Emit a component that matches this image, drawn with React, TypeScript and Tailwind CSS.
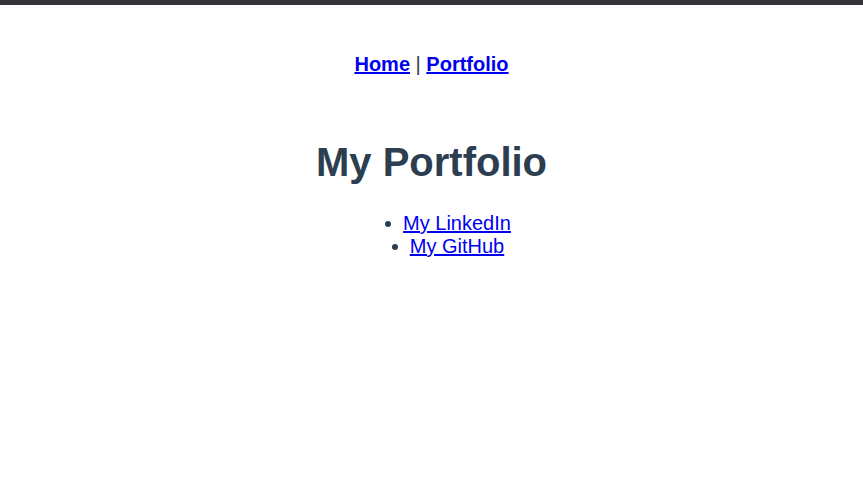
import React from "react";

function Item({ children }: { children: React.ReactNode }) {
  return (
    <li>
      <span className="relative inline-block">
        <span className="absolute left-[-18px] top-[9px] h-[6px] w-[6px] rounded-full bg-[#2c3e50]" />
        <a href="#" className="text-[#0000ee] underline">{children}</a>
      </span>
    </li>
  );
}

export default function App() {
  return (
    <div className="min-h-[492px] bg-white text-[#2c3e50] text-center" style={{ fontFamily: '"Liberation Sans", Arial, sans-serif' }}>
      <div className="h-[5px] bg-[#343538]" />
      <nav className="pt-[48px] text-[20px] leading-[23px] font-bold">
        <a href="#" className="text-[#0000ee] underline">Home</a>
        <span className="font-normal"> | </span>
        <a href="#" className="text-[#0000ee] underline">Portfolio</a>
      </nav>
      <h1 className="mt-[63px] text-[40px] leading-[46px] font-bold">My Portfolio</h1>
      <ul className="mt-[27px] list-none pl-[51px] text-[20px] leading-[23px]">
        <Item>My LinkedIn</Item>
        <Item>My GitHub</Item>
      </ul>
    </div>
  );
}
